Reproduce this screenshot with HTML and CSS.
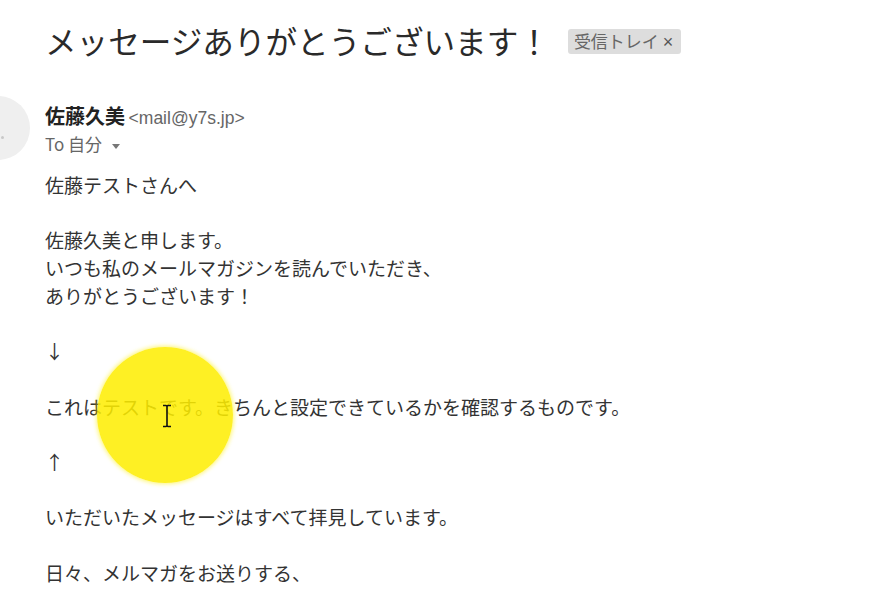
FILE: index.html
```html
<!DOCTYPE HTML>
<html lang='ja'>
<head>
<meta charset='utf-8'>
<title>メッセージありがとうございます！</title>
<link rel="stylesheet" href="styles.css">
</head>
<body>
<!--Mail view starts here-->
<div class='mail_view'>
<!--subject section starts here-->
<div class='subject'>
<span class='subject_text'>メッセージありがとうございます！</span>
<span class='label'>受信トレイ <span class='label_close'>×</span></span>
</div>
<!--subject section ends here-->
<!--message section starts here-->
<div class='message'>
<div class='avatar'><span class='avatar_dot'></span></div>
<div class='message_content'>
<div class='sender'><b class='sender_name'>佐藤久美</b> <span class='sender_mail'>&lt;mail@y7s.jp&gt;</span></div>
<div class='recipient'>To 自分 <span class='caret'></span></div>
<div class='body_text'>
<p>佐藤テストさんへ</p>
<p>&nbsp;</p>
<p>佐藤久美と申します。</p>
<p>いつも私のメールマガジンを読んでいただき、</p>
<p>ありがとうございます！</p>
<p>&nbsp;</p>
<p>↓</p>
<p>&nbsp;</p>
<p>これはテストです。きちんと設定できているかを確認するものです。</p>
<p>&nbsp;</p>
<p>↑</p>
<p>&nbsp;</p>
<p>いただいたメッセージはすべて拝見しています。</p>
<p>&nbsp;</p>
<p>日々、メルマガをお送りする、</p>
<p>その一通一通がみなさまのお役に</p>
</div>
</div>
</div>
<!--message section ends here-->
<!--cursor highlight starts here-->
<div class='highlight'></div>
<svg class='ibeam' width='10' height='24' viewBox='0 0 10 24'>
<path d='M1 1.5 H4 Q5 1.5 5 3 V21 Q5 22.5 4 22.5 H1 M9 1.5 H6 Q5 1.5 5 3 M5 21 Q5 22.5 6 22.5 H9' fill='none' stroke='#111' stroke-width='1.6'/>
</svg>
<!--cursor highlight ends here-->
</div>
<!--Mail view ends here-->
</body>
</html>
```
FILE: styles.css
```css
body
{
margin:0;
background:#ffffff;
font-family:"Noto Sans CJK JP","Noto Sans",sans-serif;
color:#333333;
overflow:hidden;
}
.mail_view
{
position:relative;
height:590px;
overflow:hidden;
padding-left:45px;
}
.subject
{
display:flex;
align-items:center;
padding-top:20px;
height:40px;
}
.subject_text
{
font-size:31.6px;
line-height:40px;
color:#2a2a2a;
}
.label
{
margin-left:18px;
margin-top:2px;
background:#dddddd;
color:#666666;
font-size:17px;
line-height:23px;
padding:0 8px 0 6px;
border-radius:3px;
}
.label_close
{
font-family:"Liberation Sans",sans-serif;
font-size:18px;
color:#555555;
}
.message
{
display:flex;
align-items:flex-start;
margin-left:-79px;
margin-top:43px;
}
.avatar
{
position:relative;
flex:none;
width:64px;
height:64px;
margin-top:-7px;
border-radius:50%;
background:#efefef;
}
.avatar_dot
{
position:absolute;
left:35px;
top:40px;
width:3px;
height:3px;
border-radius:50%;
background:#c8c8c8;
}
.message_content
{
margin-left:15px;
}
.sender
{
line-height:26px;
}
.sender_name
{
font-size:20px;
color:#222222;
}
.sender_mail
{
font-family:"Liberation Sans",sans-serif;
font-size:17.5px;
color:#666666;
}
.recipient
{
line-height:26px;
font-size:17px;
color:#666666;
}
.caret
{
display:inline-block;
margin-left:6px;
vertical-align:middle;
border-left:4px solid transparent;
border-right:4px solid transparent;
border-top:5px solid #777777;
}
.body_text
{
margin-top:14px;
font-size:19px;
line-height:27.7px;
color:#333333;
}
.body_text p
{
margin:0;
white-space:nowrap;
}
.highlight
{
position:absolute;
left:97px;
top:347px;
width:136px;
height:136px;
border-radius:50%;
background:rgba(254,238,0,0.86);
box-shadow:0 0 4px 1px rgba(254,238,0,0.55);
}
.ibeam
{
position:absolute;
left:162px;
top:404px;
}
```
